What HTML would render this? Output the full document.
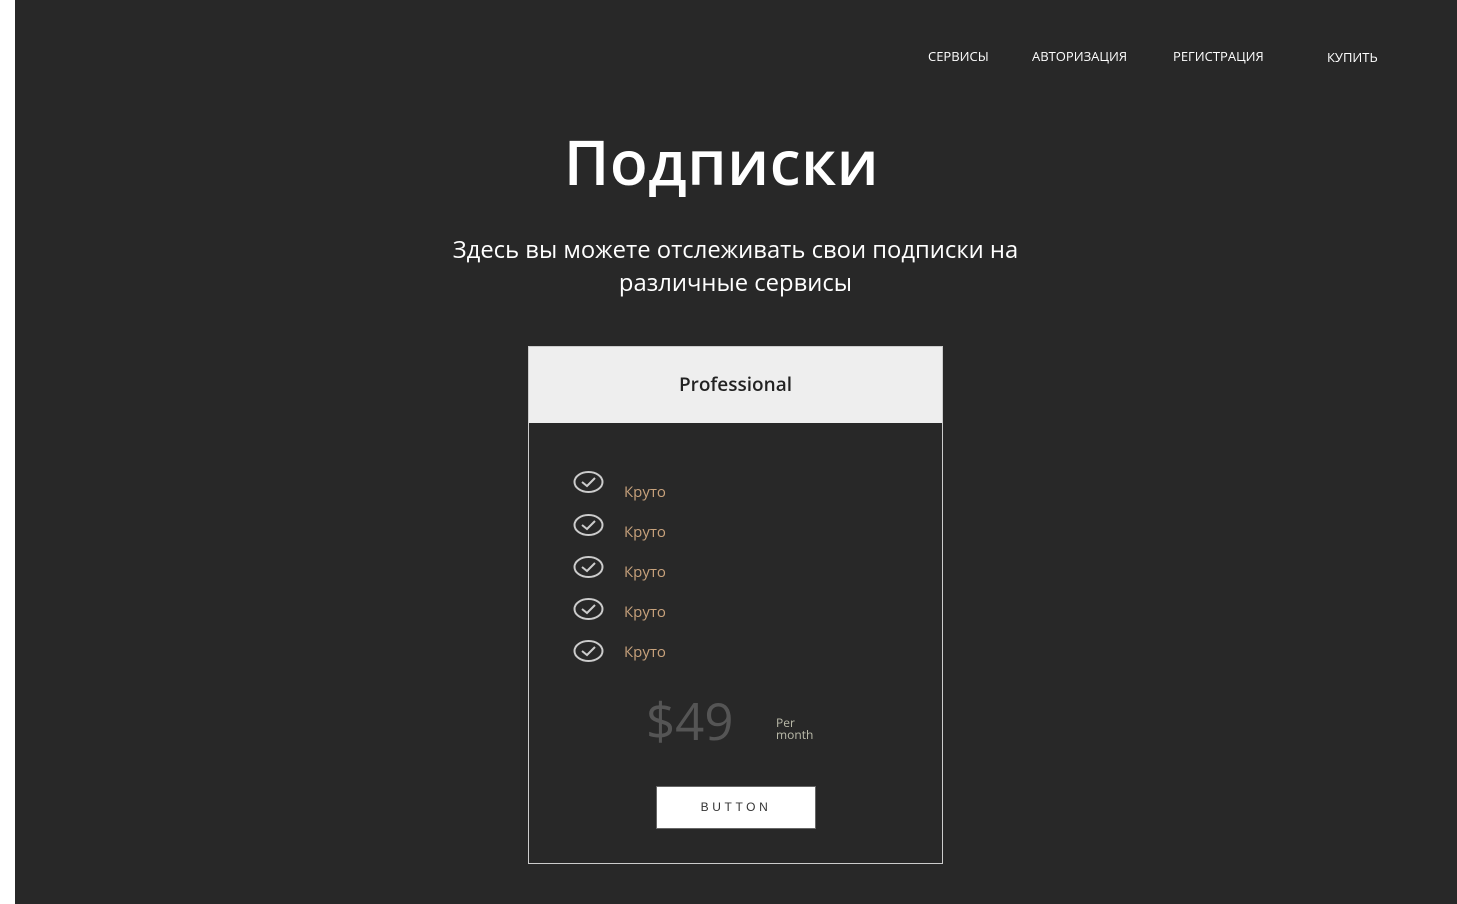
<!DOCTYPE html>
<html><head><meta charset="utf-8"><style>
*{margin:0;padding:0;box-sizing:border-box}
body{width:1457px;height:904px;background:#fff;font-family:"Open Sans","DejaVu Sans","Liberation Sans",sans-serif;overflow:hidden;position:relative}
#bg{position:absolute;left:15px;top:0;width:1442px;height:904px;background:#282828}
.nav{position:absolute;color:#fff;font-size:13px;top:47px}
h1{position:absolute;left:0;width:1443px;text-align:center;top:120px;color:#fff;font-size:62px;font-weight:600;letter-spacing:0.5px}
.sub{position:absolute;left:0;width:1471px;text-align:center;top:233px;color:#fff;font-size:23.8px;line-height:33px}
.card{position:absolute;left:528px;top:346px;width:415px;height:518px;border:1px solid #ccc}
.hd{height:76px;background:#eee;text-align:center;line-height:75px;font-size:19px;font-weight:600;color:#222}
.it{position:absolute;left:44px;height:24px}
.it svg{position:absolute;left:0;top:0}
.it span{position:absolute;left:51px;top:12px;color:#c8a27c;font-size:15px;white-space:nowrap}
.price{position:absolute;left:117px;top:338px;font-size:51px;color:#555;font-weight:400}
.per{position:absolute;left:247px;top:370px;font-size:12px;color:#bba;line-height:12px}
.btn{position:absolute;left:127px;top:439px;width:160px;height:43px;background:#fff;border:1px solid #666;text-align:center;line-height:41px;font-size:12px;letter-spacing:3.6px;color:#333;font-family:"Liberation Sans",sans-serif}
</style></head><body>
<div id="bg"></div>
<div class="nav" style="left:928px">СЕРВИСЫ</div>
<div class="nav" style="left:1032px">АВТОРИЗАЦИЯ</div>
<div class="nav" style="left:1173px">РЕГИСТРАЦИЯ</div>
<div class="nav" style="left:1327px;top:48px">КУПИТЬ</div>
<h1>Подписки</h1>
<div class="sub">Здесь вы можете отслеживать свои подписки на<br>различные сервисы</div>
<div class="card">
<div class="hd">Professional</div>
<div class="it" style="top:123px"><svg width="32" height="24"><ellipse cx="15.5" cy="12" rx="14" ry="10" fill="none" stroke="#ccc" stroke-width="2"/><path d="M9 12l5 4 8-8" fill="none" stroke="#ccc" stroke-width="2"/></svg><span>Круто</span></div>
<div class="it" style="top:166px"><svg width="32" height="24"><ellipse cx="15.5" cy="12" rx="14" ry="10" fill="none" stroke="#ccc" stroke-width="2"/><path d="M9 12l5 4 8-8" fill="none" stroke="#ccc" stroke-width="2"/></svg><span style="top:9px">Круто</span></div>
<div class="it" style="top:208px"><svg width="32" height="24"><ellipse cx="15.5" cy="12" rx="14" ry="10" fill="none" stroke="#ccc" stroke-width="2"/><path d="M9 12l5 4 8-8" fill="none" stroke="#ccc" stroke-width="2"/></svg><span style="top:7px">Круто</span></div>
<div class="it" style="top:250px"><svg width="32" height="24"><ellipse cx="15.5" cy="12" rx="14" ry="10" fill="none" stroke="#ccc" stroke-width="2"/><path d="M9 12l5 4 8-8" fill="none" stroke="#ccc" stroke-width="2"/></svg><span style="top:5px">Круто</span></div>
<div class="it" style="top:292px"><svg width="32" height="24"><ellipse cx="15.5" cy="12" rx="14" ry="10" fill="none" stroke="#ccc" stroke-width="2"/><path d="M9 12l5 4 8-8" fill="none" stroke="#ccc" stroke-width="2"/></svg><span style="top:3px">Круто</span></div>
<div class="price">$49</div>
<div class="per">Per<br>month</div>
<div class="btn">BUTTON</div>
</div>
</body></html>
